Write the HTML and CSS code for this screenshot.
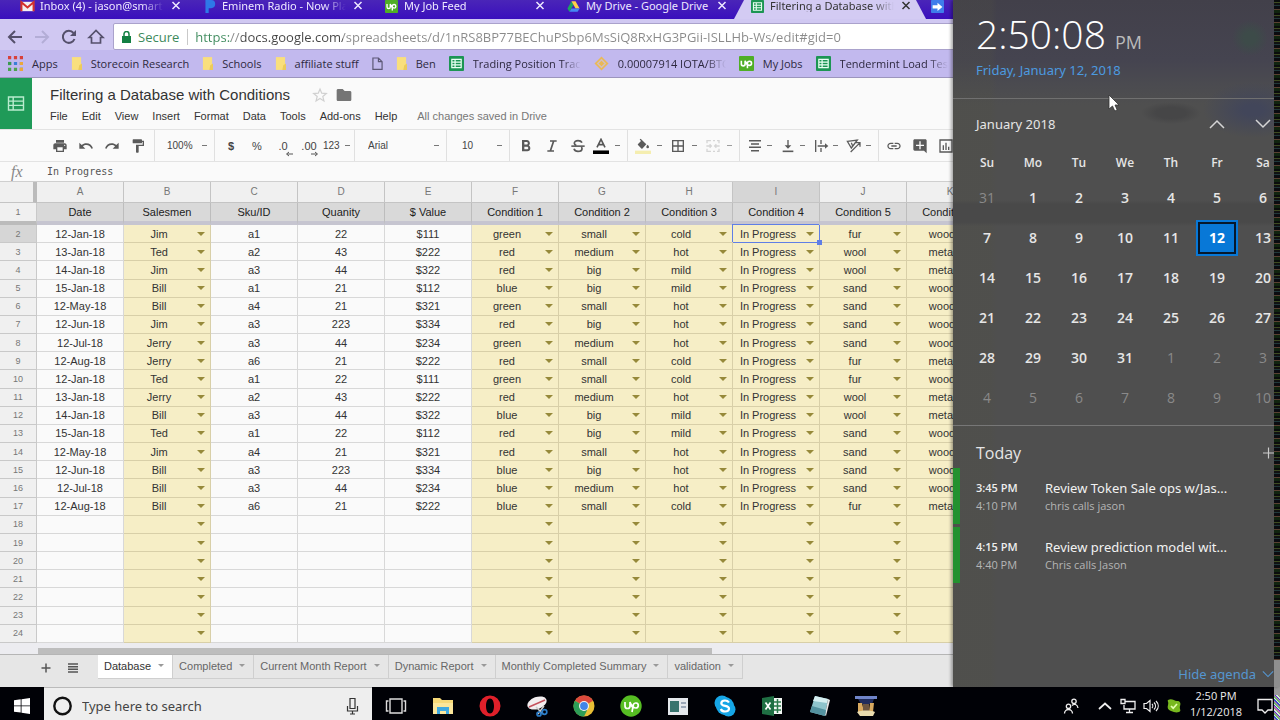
FILE: index.html
```html
<!DOCTYPE html>
<html lang="en">
<head>
<meta charset="utf-8">
<title>Filtering a Database with Conditions</title>
<link rel="stylesheet" href="styles.css">
</head>
<body>
<svg class="defs" width="0" height="0" aria-hidden="true">
  <symbol id="i-sheet" viewBox="0 0 16 16"><rect width="16" height="16" rx="1" fill="#1c9553"/><path d="M3 3.500h10v9H3zM3 6.500h10M3 9.500h10M6.500 3.500v9" fill="none" stroke="#e9fff2" stroke-width="1.300"/></symbol>
  <symbol id="i-folder" viewBox="0 0 12 16"><path d="M1 1h10v14H1z" fill="#f9df7d"/><path d="M9 10l3-2v7H8z" fill="#eccb5c"/></symbol>
  <symbol id="i-up" viewBox="0 0 16 16"><rect width="16" height="16" rx="1" fill="#4fae25"/><path d="M2.500 5v3.500a2 2 0 004 0V5c.8 2.500 2 4 3 5M9 13V7.500a2.200 2.200 0 112.200 2.500C9.500 10 8.500 8.500 7.500 6.500" fill="none" stroke="#fff" stroke-width="1.700"/></symbol>
  <symbol id="i-x" viewBox="0 0 10 10"><path d="M1.500 1.500l7 7M8.500 1.500l-7 7" stroke="currentColor" stroke-width="1.500"/></symbol>
</svg>

<main class="desktop">
  <div class="browser">
    <nav class="tabs" aria-label="Browser tabs">
      <div class="tab"><svg class="ico" viewBox="0 0 16 12"><path d="M1 1h14v10H1z" fill="#f4f0f2"/><path d="M1.500 11V1.500L8 7l6.500-5.500V11" fill="none" stroke="#d3312c" stroke-width="2.200"/></svg><span>Inbox (4) - jason@smart</span><button aria-label="Close"><svg><use href="#i-x"/></svg></button></div>
      <div class="tab"><svg class="ico" viewBox="0 0 16 16"><path d="M3 0h7a5 5 0 010 10H7v6H3z" fill="#2e78e8"/></svg><span>Eminem Radio - Now Pla</span><button aria-label="Close"><svg><use href="#i-x"/></svg></button></div>
      <div class="tab"><svg class="ico"><use href="#i-up"/></svg><span>My Job Feed</span><button aria-label="Close"><svg><use href="#i-x"/></svg></button></div>
      <div class="tab"><svg class="ico" viewBox="0 0 16 16"><path d="M5.500 1.500L8 6l-5 8.500L.5 10.500z" fill="#1da362"/><path d="M5.500 1.500h5l5 9h-5z" fill="#ffcf48"/><path d="M5.500 10.500h10L13 14.500H3z" fill="#4587f4"/></svg><span class="full">My Drive - Google Drive</span><button aria-label="Close"><svg><use href="#i-x"/></svg></button></div>
      <div class="tab active"><svg class="ico"><use href="#i-sheet"/></svg><span>Filtering a Database with</span><button aria-label="Close"><svg><use href="#i-x"/></svg></button></div>
      <svg class="ico next" viewBox="0 0 16 16"><rect width="16" height="16" rx="1" fill="#3f7ceb"/><path d="M2 6.500h6V3.500L14 8.500l-6 5v-3H2z" fill="#fff"/></svg>
    </nav>

    <div class="address-row">
      <button class="nav" aria-label="Back"><svg viewBox="0 0 16 16"><path d="M15 8H2M8 2L2 8l6 6" fill="none" stroke="#55506b" stroke-width="2"/></svg></button>
      <button class="nav" aria-label="Forward"><svg viewBox="0 0 16 16"><path d="M1 8h13M8 2l6 6-6 6" fill="none" stroke="#b3add6" stroke-width="2"/></svg></button>
      <button class="nav" aria-label="Reload"><svg viewBox="0 0 16 16"><path d="M13.500 10A6 6 0 1 1 12.500 4" fill="none" stroke="#55506b" stroke-width="2"/><path d="M15 1v6H9z" fill="#55506b"/></svg></button>
      <button class="nav" aria-label="Home"><svg viewBox="0 0 16 16"><path d="M1 8.500L8 1.500l7 7h-2.500V14h-9V8.500z" fill="none" stroke="#55506b" stroke-width="1.700"/></svg></button>
      <div class="omnibox">
        <svg class="lock" viewBox="0 0 9 12"><path d="M0 5h9v7H0z" fill="#138043"/><path d="M2 5V3a2.500 2.500 0 015 0v2" fill="none" stroke="#138043" stroke-width="1.500"/></svg>
        <label for="url">Secure</label>
        <input id="url" type="text" value="https://docs.google.com/spreadsheets/d/1nRS8BP77BEChuPSbp6MsSiQ8RxHG3PGii-ISLLHb-Ws/edit#gid=0">
      </div>
    </div>

    <nav class="bookmarks" aria-label="Bookmarks">
      <a href="#"><svg viewBox="0 0 14 14"><g stroke-width="3" stroke-dasharray="3 2.500"><path d="M0 1.500h14" stroke="#d8403a"/><path d="M0 7h14" stroke="#3a7fd8"/><path d="M0 12.500h14" stroke="#4ca24f"/></g><path d="M0 5.500h3v3H0z" fill="#3a9a50"/><path d="M11 5.500h3v3h-3zM11 11h3v3h-3z" fill="#eba83a"/></svg>Apps</a>
      <a href="#"><svg class="fold"><use href="#i-folder"/></svg>Storecoin Research</a>
      <a href="#"><svg class="fold"><use href="#i-folder"/></svg>Schools</a>
      <a href="#"><svg class="fold"><use href="#i-folder"/></svg>affiliate stuff</a>
      <a href="#" aria-label="Untitled"><svg class="fold" viewBox="0 0 12 16"><path d="M1 2h6l4 4v8.500H1zM7 2v4h4" fill="none" stroke="#5c5775" stroke-width="1.300"/></svg></a>
      <a href="#"><svg class="fold"><use href="#i-folder"/></svg>Ben</a>
      <a href="#"><svg><use href="#i-sheet"/></svg><span class="cut">Trading Position Trac</span></a>
      <a href="#"><svg viewBox="0 0 16 16"><path d="M8 .5L15.500 8 8 15.500.5 8z" fill="#e9b956"/><path d="M8 4l4 4-4 4-4-4z" fill="none" stroke="#d3bfc0" stroke-width="1.500"/></svg><span class="cut">0.00007914 IOTA/BTC</span></a>
      <a href="#"><svg><use href="#i-up"/></svg>My Jobs</a>
      <a href="#"><svg><use href="#i-sheet"/></svg><span class="cut">Tendermint Load Test</span></a>
    </nav>

    <header class="doc-head">
      <a class="brand" href="#" aria-label="Sheets home"><svg viewBox="0 0 18 16"><path d="M1 1h16v14H1zM1 5.500h16M1 10h16M6 1v14" fill="none" stroke="#b9ecce" stroke-width="1.500"/></svg></a>
      <div class="doc-info">
        <div class="doc-title"><h1>Filtering a Database with Conditions</h1>
          <button aria-label="Star"><svg viewBox="0 0 24 24"><path d="M12 3l2.600 6.300 6.900.5-5.300 4.400 1.700 6.700L12 17.300l-5.900 3.600 1.700-6.700L2.500 9.800l6.900-.5z" fill="none" stroke="#d0d0d0" stroke-width="1.800"/></svg></button>
          <button aria-label="Move to folder"><svg viewBox="0 0 24 24"><path d="M10 3H3c-1 0-2 1-2 2v14c0 1 1 2 2 2h18c1 0 2-1 2-2V8c0-1-1-2-2-2h-8z" fill="#757575"/></svg></button>
        </div>
        <div class="menus"><button>File</button><button>Edit</button><button>View</button><button>Insert</button><button>Format</button><button>Data</button><button>Tools</button><button>Add-ons</button><button>Help</button><span>All changes saved in Drive</span></div>
      </div>
    </header>

    <div class="toolbar">
      <div class="group first">
        <button aria-label="Print"><svg viewBox="0 0 24 24"><path d="M19 8H5c-1.660 0-3 1.340-3 3v6h4v4h12v-4h4v-6c0-1.660-1.340-3-3-3zm-3 11H8v-5h8v5zm3-7c-.55 0-1-.45-1-1s.45-1 1-1 1 .45 1 1-.45 1-1 1zm-1-9H6v4h12V3z"/></svg></button>
        <button aria-label="Undo"><svg viewBox="0 0 24 24"><path d="M12.500 8c-2.650 0-5.050.99-6.900 2.600L2 7v9h9l-3.620-3.620c1.390-1.160 3.160-1.880 5.120-1.880 3.540 0 6.550 2.310 7.600 5.500l2.370-.78C21.080 11.030 17.150 8 12.500 8z"/></svg></button>
        <button aria-label="Redo"><svg viewBox="0 0 24 24"><path d="M18.400 10.600C16.550 8.990 14.150 8 11.500 8c-4.650 0-8.580 3.030-9.960 7.220L3.900 16c1.050-3.190 4.050-5.500 7.600-5.500 1.950 0 3.730.72 5.120 1.880L13 16h9V7l-3.600 3.600z"/></svg></button>
        <button aria-label="Paint format"><svg viewBox="0 0 24 24"><path d="M18 4V3c0-.55-.45-1-1-1H5c-.55 0-1 .45-1 1v4c0 .55.45 1 1 1h12c.55 0 1-.45 1-1V6h1v4H9v11c0 .55.45 1 1 1h2c.55 0 1-.45 1-1v-9h8V4h-3z"/></svg></button>
      </div>
      <div class="group"><select class="zoom caret" aria-label="Zoom"><option>100%</option></select></div>
      <div class="group">
        <button><b>$</b></button><button>%</button>
        <button class="dec">.0<svg viewBox="0 0 8 6"><path d="M8 3H2M4 1L1.500 3 4 5" fill="none" stroke="#555"/></svg></button>
        <button class="dec">.00<svg viewBox="0 0 8 6"><path d="M0 3h6M4 1l2.500 2L4 5" fill="none" stroke="#555"/></svg></button>
        <button class="num caret">123</button>
      </div>
      <div class="group"><select class="font caret" aria-label="Font"><option>Arial</option></select></div>
      <div class="group"><select class="size caret" aria-label="Font size"><option>10</option></select></div>
      <div class="group">
        <button aria-label="Bold"><svg viewBox="0 0 24 24"><path d="M16 11c1-.7 1.800-1.800 1.800-3.200C17.800 5 16 3 13.300 3H6v17h8.200c2.500 0 4.300-2 4.300-4.500 0-2-1-3.700-2.500-4.500zM9.500 6H13c1 0 1.700.8 1.700 1.800S14 9.700 13 9.700H9.500zm4 11h-4v-4h4c1.100 0 1.900.9 1.900 2s-.8 2-1.900 2z"/></svg></button>
        <button aria-label="Italic"><svg viewBox="0 0 24 24"><path d="M9 4.500h10M5 19.500h10M14.500 4.500l-5 15" fill="none" stroke="#5a5a5a" stroke-width="2.600"/></svg></button>
        <button aria-label="Strikethrough"><svg viewBox="0 0 24 24"><path d="M18 7c-1-2-3-3-6-3-3.500 0-5.500 1.500-5.500 4 0 1.500 1 2.700 3 3.500M6 16c.8 2.500 3 4 6 4 3.500 0 6-1.500 6-4 0-1-.3-1.800-1-2.500" fill="none" stroke="#5a5a5a" stroke-width="2.600"/><path d="M2 11h20v2.400H2z"/></svg></button>
        <button class="dd caret ink" aria-label="Text color"><svg viewBox="0 0 18 18"><path d="M4.500 10.500L9 1.500l4.500 9M6 7.500h6" fill="none" stroke="#555" stroke-width="1.800"/><path d="M0 14h18v4H0z" fill="#000"/></svg></button>
      </div>
      <div class="group wide">
        <button class="dd caret" aria-label="Fill color"><svg viewBox="0 0 24 24"><path d="M15 7.500L8.500 1 7 2.400l2 2-4.500 4.500c-.5.500-.5 1.200 0 1.700l5 5c.5.500 1.200.5 1.700 0L17 9.500zM19 10s-2 2.200-2 3.500a2 2 0 004 0c0-1.300-2-3.500-2-3.500z"/><path d="M0 19h24v5H0z" fill="#f5eeb0"/></svg></button>
        <button class="dd caret" aria-label="Borders"><svg viewBox="0 0 24 24"><path d="M3 3v18h18V3H3zm8 16H5v-6h6v6zm0-8H5V5h6v6zm8 8h-6v-6h6v6zm0-8h-6V5h6v6z"/></svg></button>
        <button class="dd caret off" aria-label="Merge cells" disabled><svg viewBox="0 0 24 24"><path d="M3 8V4h6M12 4h3M18 4h3v4M3 16v4h6M12 20h3M18 20h3v-4M2 12h7M22 12h-7M7 9.500l2.500 2.500L7 14.500M17 9.500L14.500 12l2.500 2.500" fill="none" stroke="#c6c6c6" stroke-width="2"/></svg></button>
      </div>
      <div class="group">
        <button class="dd caret" aria-label="Horizontal align"><svg viewBox="0 0 24 24"><path d="M3 4h18M6 9h12M3 14h18M6 19h12" fill="none" stroke="#5a5a5a" stroke-width="2.300"/></svg></button>
        <button class="dd caret" aria-label="Vertical align"><svg viewBox="0 0 24 24"><path d="M4 20h16" stroke="#5a5a5a" stroke-width="2.400"/><path d="M11 3h2v8h4l-5 5-5-5h4z"/></svg></button>
        <button class="dd caret" aria-label="Text wrapping"><svg viewBox="0 0 24 24"><path d="M4 3v18M12 3v6M12 15v6M7 12h13" fill="none" stroke="#5a5a5a" stroke-width="2"/><path d="M18 8l5 4-5 4z"/></svg></button>
        <button class="dd caret" aria-label="Text rotation"><svg viewBox="0 0 24 24"><path d="M2 5l15-2L8 15zM8 7l2 5M7 21L20 8M15 7h6v6" fill="none" stroke="#5a5a5a" stroke-width="1.900"/></svg></button>
      </div>
      <div class="group last">
        <button aria-label="Insert link"><svg viewBox="0 0 24 24"><path d="M3.900 12c0-1.710 1.390-3.100 3.100-3.100h4V7H7c-2.760 0-5 2.240-5 5s2.240 5 5 5h4v-1.900H7c-1.710 0-3.100-1.390-3.100-3.100zM8 13h8v-2H8v2zm9-6h-4v1.900h4c1.710 0 3.100 1.390 3.100 3.100s-1.390 3.100-3.100 3.100h-4V17h4c2.760 0 5-2.240 5-5s-2.240-5-5-5z"/></svg></button>
        <button aria-label="Insert comment"><svg viewBox="0 0 24 24"><path d="M22 4c0-1.100-.9-2-2-2H4c-1.100 0-2 .9-2 2v13c0 1.100.9 2 2 2h14l4 4zM18 12h-5v5h-2v-5H6v-2h5V5h2v5h5z"/></svg></button>
        <button aria-label="Insert chart"><svg viewBox="0 0 24 24"><path d="M3 3h18v18H3z" fill="none" stroke="#5a5a5a" stroke-width="2"/><path d="M7 11h2v7H7zM11 7h2v11h-2zM15 13h2v5h-2z"/></svg></button>
      </div>
    </div>

    <div class="formula"><label for="fx">fx</label><input id="fx" type="text" value="In Progress"></div>

    <div class="grid-area">
      <table class="grid">
        <colgroup><col class="c-num"><col span="11" class="c-cell"></colgroup>
        <thead id="head"></thead>
        <tbody id="rows"></tbody>
      </table>
    </div>
    <div class="hscroll"><div class="thumb"></div></div>

    <footer class="sheet-tabs">
      <button class="tool" aria-label="Add sheet"><svg viewBox="0 0 12 12"><path d="M6 1.500v9M1.500 6h9" stroke="#555" stroke-width="1.500"/></svg></button>
      <button class="tool" aria-label="All sheets"><svg viewBox="0 0 12 12"><path d="M1 2h10M1 4.700h10M1 7.300h10M1 10h10" stroke="#555" stroke-width="1.500"/></svg></button>
      <button class="stab on">Database</button><button class="stab">Completed</button><button class="stab">Current Month Report</button><button class="stab">Dynamic Report</button><button class="stab">Monthly Completed Summary</button><button class="stab">validation</button>
    </footer>
  </div>

  <aside class="flyout">
    <div class="flyout-body">
      <section class="clock">
        <p class="time">2:50:08<small>PM</small></p>
        <a href="#">Friday, January 12, 2018</a>
      </section>
      <section class="cal">
        <div class="cal-head"><h2>January 2018</h2>
          <button aria-label="Previous month"><svg viewBox="0 0 16 16"><path d="M1 12l7-7 7 7" fill="none" stroke="#d5d5d5" stroke-width="1.500"/></svg></button>
          <button aria-label="Next month"><svg viewBox="0 0 16 16"><path d="M1 4l7 7 7-7" fill="none" stroke="#d5d5d5" stroke-width="1.500"/></svg></button></div>
        <table><thead><tr><th>Su</th><th>Mo</th><th>Tu</th><th>We</th><th>Th</th><th>Fr</th><th>Sa</th></tr></thead><tbody id="days"></tbody></table>
      </section>
      <section class="agenda">
        <div class="agenda-head"><h2>Today</h2><button aria-label="New event"><svg viewBox="0 0 14 14"><path d="M7 0v14M0 7h14" stroke="#ccc" stroke-width="1.500"/></svg></button></div>
        <article class="event"><b>3:45 PM</b><h3>Review Token Sale ops w/Jas...</h3><span>4:10 PM</span><span>chris calls jason</span></article>
        <article class="event"><b>4:15 PM</b><h3>Review prediction model wit...</h3><span>4:40 PM</span><span>Chris calls Jason</span></article>
        <button class="hide">Hide agenda <svg viewBox="0 0 14 14"><path d="M1 4l6 6 6-6" fill="none" stroke="currentColor" stroke-width="1.300"/></svg></button>
      </section>
    </div>
    <div class="edge"></div>
    <svg class="pointer" viewBox="0 0 12 18"><path d="M1 1v14l3.500-3 2.300 5 2.400-1-2.200-5H11z" fill="#fff" stroke="#333" stroke-width=".8"/></svg>
  </aside>
</main>

<footer class="taskbar">
  <button class="start" aria-label="Start"><svg viewBox="0 0 16 16"><path d="M0 2.300L6.700 1.300v6.200H0zM7.500 1.200L16 0v7.500H7.500zM0 8.300h6.700v6.300L0 13.700zM7.500 8.300H16V16l-8.500-1.200z" fill="#fff"/></svg></button>
  <div class="search">
    <svg viewBox="0 0 20 20"><circle cx="10" cy="10" r="8.200" fill="none" stroke="#111" stroke-width="2.400"/></svg>
    <input type="text" aria-label="Search" placeholder="Type here to search">
    <svg viewBox="0 0 20 20"><path d="M7.500 2.500h5v10h-5zM5 10v5h10v-5M10 15v3M7.500 18h5" fill="none" stroke="#333" stroke-width="1.200"/></svg>
  </div>
  <div class="apps">
    <button aria-label="Task view"><svg viewBox="0 0 22 22"><path d="M5 4h12v14H5zM3.500 6H1.500v10h2M18.500 6h2v10h-2" fill="none" stroke="#ddd" stroke-width="1.400"/></svg></button>
    <button aria-label="File Explorer"><svg viewBox="0 0 22 22"><path d="M1 3h7l2 2h11v14H1z" fill="#f6d978"/><path d="M1 8h20v11H1z" fill="#fbe69a"/><path d="M5 19v-7h12v7h-3v-3H8v3z" fill="#3fa9e0"/></svg></button>
    <button aria-label="Opera"><svg viewBox="0 0 22 22"><path fill-rule="evenodd" d="M11 .5a10.500 10.500 0 100 21 10.500 10.500 0 000-21zM11 3.500c2.500 0 4 3 4 7.500s-1.500 7.500-4 7.500-4-3-4-7.500 1.500-7.500 4-7.500z" fill="#e0202a"/></svg></button>
    <button aria-label="Snipping Tool"><svg viewBox="0 0 22 22"><ellipse cx="11" cy="8" rx="10" ry="6" fill="#f2eef0" transform="rotate(-20 11 8)"/><path d="M3 12l16-7" stroke="#c5505c" stroke-width="1.500"/><path d="M10 12l7 7M18 11l-6 8" stroke="#ccc" stroke-width="1.500"/><g fill="none" stroke="#2b7dc8" stroke-width="1.700"><circle cx="18.500" cy="17" r="2.300"/><circle cx="13" cy="19" r="2"/></g></svg></button>
    <button aria-label="Chrome"><svg viewBox="0 0 22 22"><circle cx="11" cy="11" r="10.500" fill="#e9bf35"/><path d="M11 11L1.900 5.750A10.500 10.500 0 0120.100 5.750z" fill="#dc4a3d"/><path d="M11 11L1.900 5.750A10.500 10.500 0 0011 21.500l3-6z" fill="#2d9d57"/><circle cx="11" cy="11" r="5" fill="#f4f4f4"/><circle cx="11" cy="11" r="3.900" fill="#4285e8"/></svg></button>
    <button aria-label="Upwork"><svg viewBox="0 0 22 22"><circle cx="11" cy="11" r="10.700" fill="#56bd23"/><path d="M5 7v4a2.500 2.500 0 005 0V7c.7 2.500 1.700 4.500 3 6M12 17l1.300-7a2.500 2.500 0 112.500 3c-2 0-3.300-1.500-5-4" fill="none" stroke="#fff" stroke-width="1.700"/></svg></button>
    <button aria-label="Remote Desktop"><svg viewBox="0 0 22 22"><path d="M1 3h20v17H1z" fill="#e4e8ec"/><path d="M3 6h9v11H3z" fill="#37736e"/><path d="M14 7h5v2h-5zM14 11h5v2h-5z" fill="#9ba8b8"/></svg></button>
    <button aria-label="Skype"><svg viewBox="0 0 22 22"><circle cx="8" cy="8" r="7.500" fill="#16a6e6"/><circle cx="14.500" cy="14.500" r="7" fill="#16a6e6"/><circle cx="11" cy="11" r="9" fill="#16a6e6"/><path d="M15 7.500C14 6 12.800 5.500 11 5.500c-2.300 0-3.700 1-3.700 2.700 0 3.800 7.700 1.600 7.700 5.300 0 2-1.700 3-4 3-2 0-3.500-.8-4.200-2.500" fill="none" stroke="#fff" stroke-width="2.200"/></svg></button>
    <button aria-label="Excel"><svg viewBox="0 0 22 22"><path d="M11 3h10v16H11z" fill="#f2f7f3"/><path d="M12 7h8M12 11h8M12 15h8M16.500 4v14" stroke="#2b7a4b" stroke-width="1.500"/><path d="M1 3l12-2v20L1 19z" fill="#1f6f43"/><path d="M4.500 7.500l5 7M9.500 7.500l-5 7" stroke="#fff" stroke-width="1.700"/></svg></button>
    <button aria-label="Notepad"><svg viewBox="0 0 22 22"><path d="M7 1l13 3-3 17-15-4z" fill="#8fc4cc"/><path d="M7 1l13 3-1 4L5 6z" fill="#d5eef0"/><path d="M20 4l2 1-4 16-1-1z" fill="#e8e8e8"/><path d="M4 11l14 4-1 6-15-4z" fill="#54929f"/></svg></button>
    <button aria-label="Utility"><svg viewBox="0 0 22 22"><path d="M0 1h22v3H0z" fill="#7085c9"/><path d="M3 4h16l-2 5H6z" fill="#202c5c"/><path d="M3 8h4l2 9H3zM15 8h4l-1 9h-4z" fill="#d8a95f"/><path d="M8 9h6v7H8z" fill="#6c5541"/><path d="M2 17c4-2 14-2 18 0l-2 4H5z" fill="#eadcae"/></svg></button>
  </div>
  <div class="tray">
    <button aria-label="People"><svg viewBox="0 0 16 16"><path d="M5.500 10.500a2.200 2.200 0 100-4.400 2.200 2.200 0 000 4.400zM1.500 15.500a4 4 0 018 0M11 5.500a2.200 2.200 0 100-4.400 2.200 2.200 0 000 4.400zM9 7.500c2-2 5.500-1.500 6 2.500" fill="none" stroke="#eee" stroke-width="1.300"/></svg></button>
    <button class="up" aria-label="Hidden icons"><svg viewBox="0 0 16 16"><path d="M2 11l6-5.500 6 5.500" fill="none" stroke="#eee" stroke-width="1.700"/></svg></button>
    <button aria-label="Network"><svg viewBox="0 0 16 16"><path d="M5 3.500h10v7.500H4V7M9.500 11v3M6 14.500h7M1 1.500h4v4H1z" fill="none" stroke="#eee" stroke-width="1.300"/></svg></button>
    <button aria-label="Volume"><svg viewBox="0 0 16 16"><path d="M1 5.500h2.500L7 2.500v11l-3.500-3H1zM9 6c1 1 1 3 0 4M11 4.500c2 2 2 5 0 7M13 3c3 3 3 7 0 10" fill="none" stroke="#eee" stroke-width="1.200"/></svg></button>
    <button aria-label="Security"><svg viewBox="0 0 16 16"><path d="M2 2c4-2 6 1 9 1s4 2 3 5 2 5-1 6-5 0-8-1-4-3-3-6-1-4 0-5z" fill="#78b81f"/><path d="M5 8l2.200 2.200L11 6" fill="none" stroke="#e4ffb0" stroke-width="1.700"/></svg></button>
    <time>2:50 PM<br>1/12/2018</time>
    <button class="note" aria-label="Notifications"><svg viewBox="0 0 16 16"><path d="M1 1.500h14v10.500h-4l-3 3-3-3H1z" fill="none" stroke="#eee" stroke-width="1.300"/></svg></button>
  </div>
  <div class="taskbar-edge"></div>
</footer>
<script src="app.js"></script>
</body>
</html>
```
FILE: app.js
```js
const titles = ["Date", "Salesmen", "Sku/ID", "Quanity", "$ Value", "Condition 1", "Condition 2", "Condition 3", "Condition 4", "Condition 5", "Condition 6"];
const picks = new Set([1, 5, 6, 7, 8, 9, 10]);
const P = "In Progress";
const data = [
  ["12-Jan-18", "Jim", "a1", "22", "$111", "green", "small", "cold", P, "fur", "wood"],
  ["13-Jan-18", "Ted", "a2", "43", "$222", "red", "medium", "hot", P, "wool", "metal"],
  ["14-Jan-18", "Jim", "a3", "44", "$322", "red", "big", "mild", P, "wool", "metal"],
  ["15-Jan-18", "Bill", "a1", "21", "$112", "blue", "big", "mild", P, "sand", "wood"],
  ["12-May-18", "Bill", "a4", "21", "$321", "green", "small", "hot", P, "sand", "wood"],
  ["12-Jun-18", "Jim", "a3", "223", "$334", "red", "big", "hot", P, "sand", "wood"],
  ["12-Jul-18", "Jerry", "a3", "44", "$234", "green", "medium", "hot", P, "sand", "wood"],
  ["12-Aug-18", "Jerry", "a6", "21", "$222", "red", "small", "cold", P, "fur", "metal"],
  ["12-Jan-18", "Ted", "a1", "22", "$111", "green", "small", "cold", P, "fur", "wood"],
  ["13-Jan-18", "Jerry", "a2", "43", "$222", "red", "medium", "hot", P, "wool", "metal"],
  ["14-Jan-18", "Bill", "a3", "44", "$322", "blue", "big", "mild", P, "wool", "metal"],
  ["15-Jan-18", "Ted", "a1", "22", "$112", "red", "big", "mild", P, "sand", "wood"],
  ["12-May-18", "Jim", "a4", "21", "$321", "red", "small", "hot", P, "sand", "wood"],
  ["12-Jun-18", "Bill", "a3", "223", "$334", "blue", "big", "hot", P, "sand", "wood"],
  ["12-Jul-18", "Bill", "a3", "44", "$234", "blue", "medium", "hot", P, "sand", "wood"],
  ["12-Aug-18", "Bill", "a6", "21", "$222", "blue", "small", "cold", P, "fur", "metal"]
];

document.getElementById("head").innerHTML =
  '<tr class="letters"><th class="corner"></th>' +
  [..."ABCDEFGHIJK"].map(c => `<th${c === "I" ? ' class="sel"' : ""}>${c}</th>`).join("") + "</tr>" +
  '<tr class="titles"><th class="n">1</th>' + titles.map(t => `<th>${t}</th>`).join("") + "</tr>";

let html = "";
for (let r = 0; r < 23; r++) {
  html += `<tr><th class="n${r === 0 ? " sel" : ""}">${r + 2}</th>`;
  for (let c = 0; c < 11; c++) {
    const text = data[r] ? data[r][c] : "";
    if (picks.has(c)) {
      const active = r === 0 && c === 8 ? " active" : "";
      html += `<td class="pick${active}">${text}<button aria-label="Choose value"></button></td>`;
    } else {
      html += `<td>${text}</td>`;
    }
  }
  html += "</tr>";
}
document.getElementById("rows").innerHTML = html;

let days = "";
for (let w = 0; w < 6; w++) {
  days += "<tr>";
  for (let d = 0; d < 7; d++) {
    const n = w * 7 + d;
    const label = n === 0 ? 31 : n > 31 ? n - 31 : n;
    const cls = n === 0 || n > 31 ? "dim" : n === 12 ? "today" : "";
    days += `<td><button class="${cls}">${label}</button></td>`;
  }
  days += "</tr>";
}
document.getElementById("days").innerHTML = days;
```
FILE: styles.css
```css
* { box-sizing: border-box; }
html, body { height: 100%; }
body { margin: 0; display: flex; flex-direction: column; overflow: hidden; font-family: "Liberation Sans", Arial, sans-serif; font-size: 11px; color: #333; background: #000; }
button, input, select { font: inherit; color: inherit; border: 0; padding: 0; margin: 0; background: none; }
a { color: inherit; text-decoration: none; }
h1, h2, h3, p { margin: 0; font-weight: normal; }
svg { display: block; flex: none; }
.defs { position: absolute; }

.desktop { flex: 1; min-height: 0; position: relative; display: flex; }
.browser { flex: 1; min-width: 0; display: flex; flex-direction: column; background: #fafafa; overflow: hidden; }

/* browser tabs */
.tabs { display: flex; height: 19px; flex: none; padding-left: 6px; overflow: hidden; background: linear-gradient(#4a25b8, #3a0fbd); font: 11px/12px "Noto Sans", "Open Sans", sans-serif; color: #eee8ff; }
.tab { width: 182px; flex: none; display: flex; align-items: flex-start; gap: 5px; padding-left: 14px; }
.tab .ico, .next { width: 15px; height: 13px; }
.tab span { width: 124px; overflow: hidden; white-space: nowrap; -webkit-mask-image: linear-gradient(90deg, #000 82%, transparent); mask-image: linear-gradient(90deg, #000 82%, transparent); }
.tab .full { overflow: visible; -webkit-mask-image: none; mask-image: none; }
.tab button { margin-left: 2px; }
.tab button svg { width: 10px; height: 11px; }
.tab.active { background: #d3cbf3; color: #333; width: 196px; padding-left: 16px; clip-path: polygon(10px 0, 182px 0, 192px 100%, 0 100%); }

.address-row { flex: none; display: flex; align-items: center; gap: 9px; height: 31px; padding: 4px 0 0 6px; background: #d0c8f2; }
.nav svg { width: 18px; height: 16px; }
.omnibox { flex: 1; height: 27px; margin-left: -1px; display: flex; align-items: center; background: #fff; border: 1px solid #aaa2cc; border-radius: 2px; padding-left: 8px; font: 13px/20px "Open Sans", "Noto Sans", sans-serif; }
.lock { width: 9px; height: 12px; }
.omnibox label { color: #3d8a5c; margin: 0 7px; padding-right: 8px; border-right: 1px solid #c9c9c9; line-height: 16px; }
.omnibox input { flex: 1; height: 22px; outline: 0; color: transparent; background: linear-gradient(90deg, #3d8a5c 36px, #888 36px, #888 46px, #444 46px, #444 148px, #8a8a8a 148px) text; }

.bookmarks { flex: none; display: flex; align-items: center; gap: 13px; height: 28px; padding-left: 8px; background: #c2b9ee; border-bottom: 1px solid #9c95bd; font: 11px/16px "Open Sans", "Noto Sans", sans-serif; white-space: nowrap; color: #2e2940; }
.bookmarks a { display: flex; align-items: center; gap: 9px; flex: none; }
.bookmarks svg { width: 15px; height: 15px; }
.bookmarks .fold { width: 11px; height: 15px; }
.cut { width: 108px; overflow: hidden; -webkit-mask-image: linear-gradient(90deg, #000 82%, transparent); mask-image: linear-gradient(90deg, #000 82%, transparent); }

/* document heading */
.doc-head { flex: none; display: flex; height: 52px; border-bottom: 1px solid #e3e3e3; }
.brand { width: 32px; background: #1f9a58; display: grid; place-items: center; }
.brand svg { width: 18px; height: 15px; }
.doc-info { padding: 7px 0 0 18px; }
.doc-title { display: flex; align-items: center; gap: 8px; }
.doc-title h1 { font-size: 15px; line-height: 20px; margin-right: 14px; }
.doc-title svg { width: 16px; height: 16px; }
.menus { display: flex; gap: 14px; margin-top: 4px; line-height: 14px; white-space: nowrap; }
.menus span { margin-left: 6px; color: #777; }

/* toolbar */
.toolbar { flex: none; display: flex; height: 32px; border-bottom: 1px solid #e3e3e3; fill: #5a5a5a; color: #444; }
.group { display: flex; align-items: center; border-right: 1px solid #e0e0e0; padding: 0 3px; flex: none; }
.group.first { padding-left: 47px; }
.group.last { border: 0; padding-left: 2px; }
.toolbar button { width: 26px; height: 24px; display: flex; align-items: center; justify-content: center; flex: none; position: relative; }
.toolbar svg { width: 16px; height: 16px; }
.toolbar button.dd { width: 33px; justify-content: flex-start; padding-left: 4px; }
.toolbar .wide button.dd { width: 35px; }
.toolbar button.ink { padding-left: 2px; }
.toolbar select { appearance: none; height: 20px; font-size: 10px; }
.caret { background: linear-gradient(#777, #777) right 4px center / 5px 1px no-repeat; }
.zoom { width: 53px; padding-left: 9px; }
.font { width: 85px; padding-left: 10px; }
.size { width: 56px; padding-left: 12px; }
.toolbar .num { width: 29px; font-size: 10px; justify-content: flex-start; padding-left: 1px; background-position: right 1px center; }
.toolbar .dec svg { position: absolute; right: 3px; bottom: 1px; width: 8px; height: 6px; }
.toolbar .off { opacity: 0.7; }

.formula { flex: none; display: flex; align-items: center; height: 20px; border-bottom: 1px solid #cfcfcf; }
.formula label { width: 47px; padding-left: 11px; font: italic 16px/18px "Liberation Serif", serif; color: #888; }
.formula input { flex: 1; font: 10px/16px "DejaVu Sans Mono", monospace; color: #555; }

/* spreadsheet */
.grid-area { flex: 1; min-height: 0; overflow: hidden; }
.grid { table-layout: fixed; width: 994px; height: 100%; border-collapse: separate; border-spacing: 0; }
.c-num { width: 37px; }
.c-cell { width: 87px; }
.grid th, .grid td { padding: 0; text-align: center; font-weight: normal; white-space: nowrap; border-right: 1px solid #d8d8d8; border-bottom: 1px solid #d8d8d8; line-height: 14px; overflow: hidden; }
.letters th { height: 21px; background: #f0f0f0; font-size: 10px; color: #777; border-color: #c4c4c4; }
.letters .corner { border-right: 4px solid #bbb; }
.titles th { height: 22px; background: #d9d9d9; border-right-color: #bdbdbd; border-bottom: 4px solid #c6c5d0; color: #222; }
.grid .n { background: #f0f0f0; font-size: 9px; color: #777; border-color: #c9c9c9; }
.grid .sel { background: #d6d6d6; }
.grid .titles .n { border-bottom-color: #bbb; }
.grid td.pick { position: relative; padding-right: 16px; background: #f6eec6; border-color: #d8cfa8; }
.pick button { position: absolute; right: 5px; top: 50%; margin-top: -2px; border: 4px solid transparent; border-top-color: #96893a; border-bottom: 0; }
.grid td.active { overflow: visible; box-shadow: -1px -1px #5f7ee6; border-color: #5f7ee6; z-index: 1; }
.active::after { content: ""; position: absolute; right: -3px; bottom: -3px; width: 5px; height: 5px; background: #5f7ee6; }

.hscroll { flex: none; height: 12px; padding: 5px 0 0 38px; background: #ececf0; border-bottom: 1px solid #b5b5b5; }
.thumb { width: 674px; height: 6px; background: #bdbdbd; }
.sheet-tabs { flex: none; display: flex; height: 32px; padding-left: 32px; background: #e6e6e6; color: #666; }
.tool { width: 27px; height: 26px; display: grid; place-items: center; }
.tool svg { width: 12px; height: 12px; }
.stab { display: flex; align-items: center; height: 24px; padding: 0 8px 2px 6px; border: solid #cfcfcf; border-width: 0 1px 1px 0; white-space: nowrap; }
.tool + .stab { margin-left: 12px; }
.stab::after { content: ""; margin-left: 7px; border: 3px solid transparent; border-top-color: #999; border-bottom: 0; }
.stab.on { background: #fff; color: #333; }

/* clock and calendar flyout */
.flyout { position: absolute; top: 0; right: 0; bottom: 0; width: 327px; display: flex; font-family: "Open Sans", "Noto Sans", sans-serif; color: #e6e6e6; box-shadow: -2px 0 3px #0005; }
.flyout-body { flex: 1; min-width: 0; overflow: hidden; display: flex; flex-direction: column;
  background:
    radial-gradient(ellipse 50px 28px at 300px 110px, #42465a 20%, transparent),
    radial-gradient(ellipse 30px 11px at 218px 113px, #464647 50%, transparent),
    radial-gradient(circle at 297px 38px, #3d4b49 6px, transparent 18px),
    linear-gradient(transparent 200px, #494949 204px, #494949 222px, transparent 226px),
    linear-gradient(90deg, #5050433a 38px, transparent 44px),
    linear-gradient(#42404a, #454450 60px, #4b4b50 85px, #4f4f4f 105px); }
.clock { height: 99px; flex: none; padding: 7px 0 0 23px; border-bottom: 1px solid #707070; }
.time { font-size: 39px; line-height: 54px; height: 54px; font-weight: 300; color: #fff; white-space: nowrap; }
.time small { margin-left: 9px; font-size: 18px; font-weight: normal; color: #bbb; }
.clock a { display: block; font: 13px/18px "Noto Sans", sans-serif; color: #4c9be0; }
.cal { flex: none; height: 327px; border-bottom: 1px solid #777; }
.cal-head { display: flex; align-items: center; height: 50px; padding-left: 23px; }
.cal-head h2 { flex: 1; font: 13px/18px "Noto Sans", sans-serif; }
.cal-head button + button { margin: 0 3px 0 30px; }
.cal-head svg { width: 16px; height: 16px; }
.cal table { table-layout: fixed; width: 322px; margin-left: 11px; border-spacing: 0; }
.cal th { height: 29px; padding: 5px 0 0; vertical-align: top; font-size: 12px; line-height: 17px; font-weight: 600; }
.cal td { height: 40px; padding: 0; text-align: center; font-size: 14px; font-weight: 600; }
.cal td button { width: 42px; height: 36px; line-height: 20px; }
.cal .dim { color: #8a8a8a; font-weight: normal; }
.cal .today { background: #0878d7; border: 2px solid #0878d7; box-shadow: inset 0 0 0 2px #06182c; font-weight: 700; color: #fff; }
.agenda { flex: 1; display: flex; flex-direction: column; }
.agenda-head { display: flex; justify-content: space-between; align-items: center; height: 42px; padding: 11px 0 0 23px; font-size: 16px; line-height: 22px; flex: none; }
.agenda-head h2 { font-size: 16px; }
.agenda-head svg { width: 11px; height: 14px; }
.event { display: grid; grid-template-columns: 69px 1fr; align-content: start; height: 56px; margin-bottom: 3px; padding: 10px 0 0 16px; border-left: 7px solid #23912f; font-size: 11px; line-height: 16px; color: #b5b5b5; }
.event b { font-weight: 600; color: #eee; line-height: 20px; }
.event h3 { font: 13px/20px "Noto Sans", sans-serif; color: #f2f2f2; white-space: nowrap; }
.hide { margin: auto 0 3px auto; display: flex; align-items: center; gap: 6px; font: 13px/20px "Noto Sans", sans-serif; color: #5596d0; }
.hide svg { width: 12px; height: 14px; }
.edge { width: 6px; background: linear-gradient(transparent 660px, #8f8f8f 660px), repeating-linear-gradient(#0a0c0c 0 2px, #3d4a20 2px 3px, #111 3px 5px, #20383a 5px 6px, #0b0b10 6px 9px, #5a4030 9px 10px, #10240f 10px 13px); }
.pointer { position: absolute; left: 155px; top: 94px; width: 12px; height: 18px; }

/* taskbar */
.taskbar { flex: none; height: 33px; display: flex; background: #000106; color: #eee; font-family: "Open Sans", "Noto Sans", sans-serif; overflow: hidden; }
.taskbar button { display: grid; place-items: center; }
.start { width: 44px; }
.start svg { width: 16px; height: 16px; margin-top: 4px; }
.search { width: 328px; display: flex; align-items: center; padding: 4px 9px 0 8px; gap: 9px; background: #eeeeee; border-top: 1px solid #bbb; color: #444; }
.search svg { width: 21px; height: 20px; }
.search input { flex: 1; min-width: 0; font: 13px/20px "Noto Sans", sans-serif; }
.search input::placeholder { color: #444; opacity: 1; }
.apps { display: flex; flex: 1; padding-top: 4px; }
.apps button { width: 47px; }
.apps svg { width: 22px; height: 22px; }
.tray { display: flex; align-items: center; }
.tray button { width: 23px; padding-top: 4px; }
.tray .up { margin-left: 11px; }
.tray svg { width: 16px; height: 16px; }
.tray time { width: 62px; text-align: center; font-size: 11px; line-height: 16px; white-space: nowrap; padding-top: 1px; }
.tray .note { width: 27px; padding-left: 8px; }
.taskbar-edge { width: 6px; background: linear-gradient(#999 8px, transparent 8px), repeating-linear-gradient(45deg, #6abf69 0 1px, #d05fb4 1px 2px, #3358c8 2px 3px, #ddd 3px 4px); }
```
